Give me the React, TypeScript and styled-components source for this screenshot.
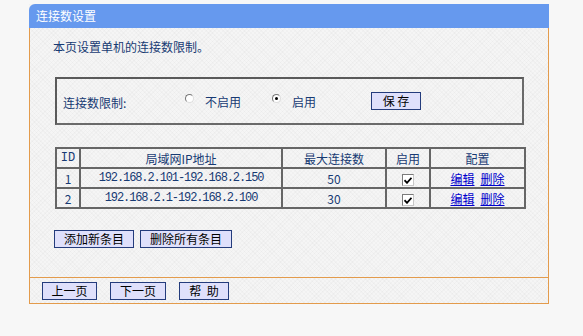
import React from "react";
import styled, { createGlobalStyle } from "styled-components";

const GlobalStyle = createGlobalStyle`
  html, body {
    margin: 0;
    padding: 0;
    background: #f7f7f7;
    font-family: "Noto Sans CJK SC", "DejaVu Sans", sans-serif;
    font-size: 12px;
    color: #173a73;
  }
`;

const rules = [
  { id: 1, range: "192.168.2.101-192.168.2.150", max: 50, on: true },
  { id: 2, range: "192.168.2.1-192.168.2.100", max: 30, on: true },
];

const CheckMark = () => (
  <svg width="8" height="7" viewBox="0 0 8 7">
    <path d="M0.5 3.2 L3 5.8 L7.5 0.8" fill="none" stroke="#000" strokeWidth="1.8" />
  </svg>
);

export default function App() {
  return (
    <>
      <GlobalStyle />
      <Panel>
        <Header>连接数设置</Header>
        <Body>
          <Intro>本页设置单机的连接数限制。</Intro>
          <LimitBox>
            <Label>连接数限制:</Label>
            <RadioOption $w={87}>
              <Radio />
              <span>不启用</span>
            </RadioOption>
            <RadioOption $w={99}>
              <Radio $checked />
              <span>启用</span>
            </RadioOption>
            <Button $w={50}>保&nbsp;存</Button>
          </LimitBox>
          <Table>
            <colgroup>
              <col style={{ width: 24 }} />
              <col style={{ width: 202 }} />
              <col style={{ width: 104 }} />
              <col style={{ width: 44 }} />
              <col style={{ width: 95 }} />
            </colgroup>
            <thead>
              <tr>
                <Th $mono>ID</Th>
                <Th>局域网IP地址</Th>
                <Th>最大连接数</Th>
                <Th>启用</Th>
                <Th>配置</Th>
              </tr>
            </thead>
            <tbody>
              {rules.map((r) => (
                <tr key={r.id}>
                  <Td>{r.id}</Td>
                  <Td $mono>{r.range}</Td>
                  <Td>{r.max}</Td>
                  <Td>
                    <Check>{r.on && <CheckMark />}</Check>
                  </Td>
                  <Td>
                    <Link>编辑</Link>
                    <Link>删除</Link>
                  </Td>
                </tr>
              ))}
            </tbody>
          </Table>
          <Actions>
            <Button $w={80}>添加新条目</Button>
            <Button $w={92}>删除所有条目</Button>
          </Actions>
        </Body>
        <Footer>
          <Button $w={55}>上一页</Button>
          <Button $w={56}>下一页</Button>
          <Button $w={50}>帮&nbsp;&nbsp;助</Button>
        </Footer>
      </Panel>
    </>
  );
}

const Panel = styled.div`
  margin: 4px 0 0 29px;
  width: 520px;
  background-color: #f5f5f5;
  background-image: repeating-linear-gradient(
      45deg,
      rgba(0, 0, 0, 0.018) 0 1px,
      transparent 1px 3px
    ),
    repeating-linear-gradient(
      -45deg,
      rgba(0, 0, 0, 0.018) 0 1px,
      transparent 1px 3px
    );
`;

const Header = styled.div`
  height: 24px;
  line-height: 24px;
  padding-left: 7px;
  background: #6699ee;
  color: #fff;
  border-top-left-radius: 6px;
  font-size: 12px;
`;

const Body = styled.div`
  height: 250px;
  box-sizing: border-box;
  padding: 9px 0 0 25px;
  border-left: 1px solid #e39b4c;
  border-right: 1px solid #e39b4c;
  border-bottom: 1px solid #e39b4c;
`;

const Intro = styled.div`
  height: 20px;
  line-height: 20px;
  margin-left: -2px;
`;

const LimitBox = styled.div`
  margin-top: 20px;
  width: 469px;
  height: 48px;
  box-sizing: border-box;
  border: 2px solid #5a5a5a;
  border-right-color: #6a6a6a;
  border-bottom-color: #6a6a6a;
  display: flex;
  align-items: center;
  padding-left: 6px;
`;

const Label = styled.span`
  width: 122px;
  padding-top: 2px;
`;

const RadioOption = styled.span<{ $w: number }>`
  width: ${(p) => p.$w}px;
  display: flex;
  align-items: center;
  gap: 11px;
`;

const Radio = styled.span<{ $checked?: boolean }>`
  width: 9px;
  height: 9px;
  margin-top: -6px;
  border-radius: 50%;
  box-sizing: border-box;
  border: 1px solid #777;
  border-right-color: #ddd;
  border-bottom-color: #ddd;
  background: #fff;
  display: flex;
  align-items: center;
  justify-content: center;
  &::after {
    content: "";
    width: 3px;
    height: 3px;
    border-radius: 50%;
    background: ${(p) => (p.$checked ? "#000" : "transparent")};
  }
`;

const Button = styled.button<{ $w: number }>`
  width: ${(p) => p.$w}px;
  height: 18px;
  padding: 0;
  box-sizing: border-box;
  border: 1px solid #243c7c;
  background: #dfe0fb;
  color: #000;
  font-family: "Noto Sans CJK SC", sans-serif;
  font-size: 12px;
  line-height: 16px;
  cursor: pointer;
`;

const Table = styled.table`
  margin-top: 22px;
  width: 469px;
  table-layout: fixed;
  border-collapse: collapse;
  border: 2px solid #555;
`;

const monoFont = '"Liberation Mono", "Noto Sans CJK SC", monospace';

const Th = styled.th<{ $mono?: boolean }>`
  height: 18px;
  padding: 0;
  border: 2px solid #666;
  font-weight: normal;
  text-align: center;
  font-size: 12px;
  font-family: ${(p) => (p.$mono ? monoFont : "inherit")};
`;

const Td = styled.td<{ $mono?: boolean }>`
  height: 18px;
  padding: 0;
  border: 2px solid #666;
  text-align: center;
  font-size: 12px;
  letter-spacing: ${(p) => (p.$mono ? "-1.1px" : "normal")};
  font-family: ${(p) => (p.$mono ? monoFont : "inherit")};
`;

const Check = styled.span`
  display: inline-flex;
  align-items: center;
  justify-content: center;
  width: 12px;
  height: 12px;
  box-sizing: border-box;
  border: 1px solid #7a7a7a;
  border-right-color: #c8c8c8;
  border-bottom-color: #c8c8c8;
  background: #fff;
  vertical-align: middle;
`;

const Link = styled.a`
  color: #0000cc;
  text-decoration: underline;
  margin: 0 3px;
  cursor: pointer;
`;

const Actions = styled.div`
  margin-top: 21px;
  display: flex;
  gap: 6px;
  margin-left: -1px;
`;

const Footer = styled.div`
  height: 26px;
  box-sizing: border-box;
  border-left: 1px solid #e39b4c;
  border-right: 1px solid #e39b4c;
  border-bottom: 1px solid #e39b4c;
  display: flex;
  align-items: center;
  gap: 13px;
  padding-left: 12px;
`;
